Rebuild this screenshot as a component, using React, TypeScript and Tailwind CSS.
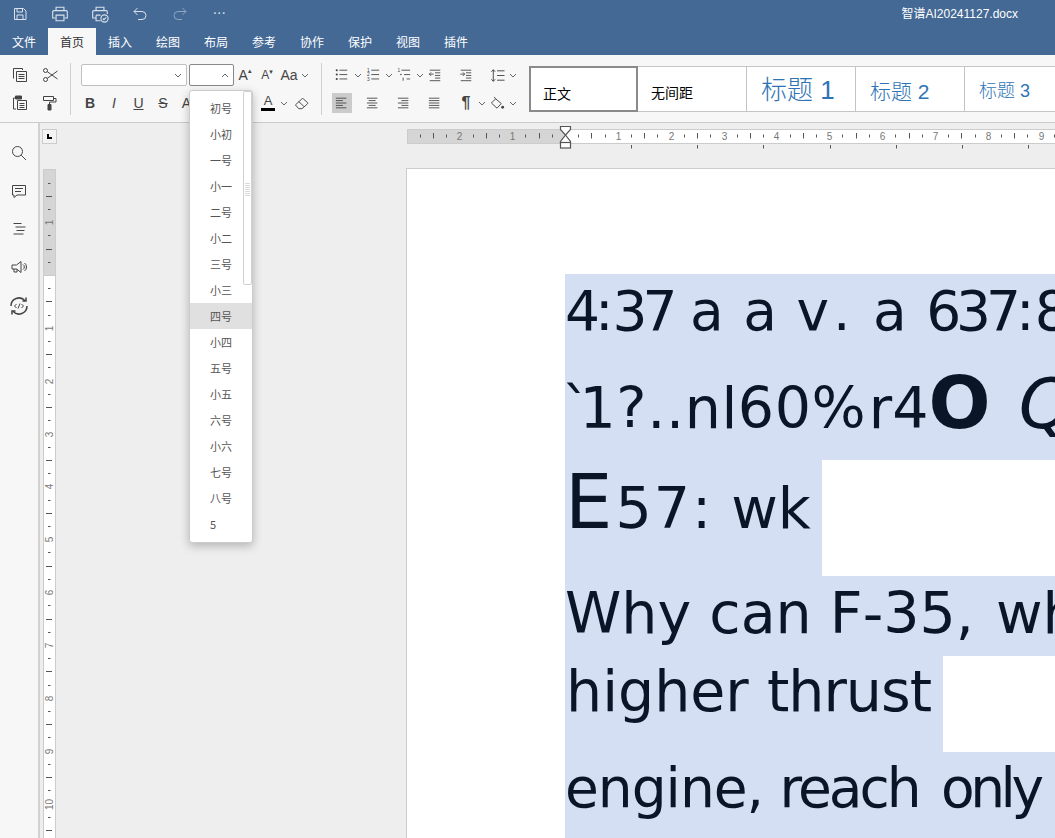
import React from 'react';

const SIZES = ['初号', '小初', '一号', '小一', '二号', '小二', '三号', '小三', '四号', '小四', '五号', '小五', '六号', '小六', '七号', '八号', '5'];
const TABS = ['文件', '首页', '插入', '绘图', '布局', '参考', '协作', '保护', '视图', '插件'];
const STEP = 52.85 / 4;

const Ic = ({ s = 16, children }: { s?: number; children: React.ReactNode }) => (
  <svg width={s} height={s} viewBox="0 0 16 16" fill="none" stroke="currentColor" strokeWidth="1">
    {children}
  </svg>
);

const Chev = ({ up }: { up?: boolean }) => (
  <svg width="8" height="5" viewBox="0 0 8 5" fill="none" stroke="#666" strokeWidth="1">
    <path d={up ? 'M1 4l3-3 3 3' : 'M1 1l3 3 3-3'} />
  </svg>
);

// width-fixed toolbar slot
const Slot = ({ w, active, className, children }: { w: string; active?: boolean; className?: string; children?: React.ReactNode }) => (
  <div className={`${w} h-7 flex items-center justify-center shrink-0 ${className ?? ''}`}>
    {active ? <div className="w-5 h-5 bg-[#cbcbcb] flex items-center justify-center">{children}</div> : children}
  </div>
);

const Divider = () => <div className="w-px h-[52px] bg-[#d0d0d0] self-center shrink-0" />;

const Lines = ({ rows }: { rows: [number, number][] }) => (
  <Ic s={14}>
    {rows.map(([x, w], i) => (
      <path key={i} d={`M${x} ${2.5 + i * 2.75}h${w}`} />
    ))}
  </Ic>
);

const HRuler = () => {
  const ticks = [];
  for (let k = -11; k <= 37; k++) {
    if (k === 0) continue;
    const x = Math.round(158 + k * STEP) + 0.5;
    if (k % 4 === 0) {
      ticks.push(<text key={k} x={x} y={14.5} textAnchor="middle" fontSize="10" fill="#777" fontFamily="Liberation Sans, sans-serif">{Math.abs(k / 4)}</text>);
    } else if (k % 2 === 0) {
      ticks.push(<path key={k} d={`M${x} 8v5.5`} stroke="#555" />);
    } else {
      ticks.push(<path key={k} d={`M${x} 9.5v3`} stroke="#555" />);
    }
  }
  const stops = [0, 1, 2, 3, 4, 5, 6].map(i => (
    <path key={i} d={`M${Math.round(224 + i * 66.2) + 0.5} 20v3.5`} stroke="#555" />
  ));
  return (
    <svg width="648" height="25" className="block shrink-0">
      <rect x="0.5" y="4.5" width="660" height="14" fill="#fff" stroke="#ccc" />
      <rect x="0.5" y="4.5" width="158" height="14" fill="#d5d5d5" stroke="#ccc" />
      {ticks}
      {stops}
      <path d="M153.5 1.5h10v3l-5 5.5 5 6.500v1h-10v-1l5-6.500-5-5.500z" fill="#fff" stroke="#555" strokeWidth="1.2" />
      <rect x="153.5" y="17.500" width="10" height="5.500" fill="#fff" stroke="#555" strokeWidth="1.2" />
    </svg>
  );
};

const VRuler = () => {
  const ticks = [];
  for (let k = -7; k <= 42; k++) {
    if (k === 0) continue;
    const y = Math.round(106 + k * STEP) + 0.5;
    if (k % 4 === 0) {
      ticks.push(<text key={k} x={0} y={0} transform={`translate(9.500 ${y}) rotate(-90)`} textAnchor="middle" fontSize="10" fill="#777" fontFamily="Liberation Sans, sans-serif">{Math.abs(k / 4)}</text>);
    } else if (k % 2 === 0) {
      ticks.push(<path key={k} d={`M3 ${y}h6`} stroke="#555" />);
    } else {
      ticks.push(<path key={k} d={`M5 ${y}h2.500`} stroke="#555" />);
    }
  }
  return (
    <svg width="13" height="669" className="block shrink-0">
      <rect x="0.5" y="0.5" width="12" height="680" fill="#fff" stroke="#ccc" />
      <rect x="0.5" y="0.5" width="12" height="106" fill="#d5d5d5" stroke="#ccc" />
      {ticks}
    </svg>
  );
};

const TitleBar = () => (
  <div className="h-7 flex items-center text-[#d9e1eb] relative">
    <div className="w-10 flex justify-center">
      <Ic>
        <path d="M2.500 2.500h9l2.500 2.500v8.500H2.500z" />
        <path d="M5 2.500v3.500h5.500v-3.500M5 13.500V9h6v4.500" />
      </Ic>
    </div>
    <div className="w-10 flex justify-center">
      <Ic s={18}>
        <path d="M4.500 5V2h7v3M4 11.500H1.500V6a1 1 0 0 1 1-1h11a1 1 0 0 1 1 1v5.500H12" />
        <path d="M4.500 9h7v5h-7z" />
      </Ic>
    </div>
    <div className="w-10 flex justify-center">
      <Ic s={18}>
        <path d="M4.500 5V2h7v3M4 11.500H1.500V6a1 1 0 0 1 1-1h11a1 1 0 0 1 1 1v2M4.500 9h4M4.500 9v5h4" />
        <circle cx="12" cy="12" r="3.200" />
        <path d="M10.500 12l1 1 2-2" />
      </Ic>
    </div>
    <div className="w-10 flex justify-center">
      <Ic>
        <path d="M5.500 2L2 5.500 5.500 9M2 5.500h8a4 4 0 0 1 0 8H6" />
      </Ic>
    </div>
    <div className="w-10 flex justify-center opacity-50">
      <Ic>
        <path d="M10.500 2L14 5.500 10.500 9M14 5.500H6a4 4 0 0 0 0 8h4" />
      </Ic>
    </div>
    <div className="w-10 flex justify-center text-[10px] tracking-[1px] leading-none">
      <span className="font-['Liberation_Sans',sans-serif] font-bold">···</span>
    </div>
    <div className="ml-auto pr-[37px] text-[12px] text-white font-['Liberation_Sans','Noto_Sans_CJK_SC',sans-serif]">智谱AI20241127.docx</div>
  </div>
);

const Tabs = () => (
  <div className="h-[27px] flex">
    {TABS.map(t => (
      <div key={t} className={`w-12 flex items-center justify-center text-[12px] ${t === '首页' ? 'bg-[#f7f7f7] text-[#333]' : 'text-white'}`}>
        {t}
      </div>
    ))}
  </div>
);

const Toolbar = () => (
  <div className="h-[68px] bg-[#f7f7f7] border-b border-[#cbcbcb] flex text-[#444] overflow-hidden">
    {/* clipboard */}
    <div className="w-[70px] pl-[5px] pt-[6px] shrink-0">
      <div className="flex">
        <Slot w="w-[30px]">
          <Ic>
            <path d="M1.500 11.500v-10h9V3" />
            <path d="M4.500 4.500h10v10h-10zM6.500 7.500h6M6.500 9.500h6M6.500 11.500h6" />
          </Ic>
        </Slot>
        <Slot w="w-[30px]">
          <Ic>
            <circle cx="3.500" cy="3.500" r="2" />
            <circle cx="3.500" cy="12.500" r="2" />
            <path d="M5.200 4.600L15.500 12M5.200 11.400L15.500 4" />
          </Ic>
        </Slot>
      </div>
      <div className="flex">
        <Slot w="w-[30px]">
          <Ic>
            <path d="M4 3H1.500v11H4" />
            <path d="M3.500 1h6v3h-6z" fill="currentColor" />
            <path d="M5.500 5.500h9v9h-9zM7.500 8.500h5M7.500 10.500h5M7.500 12.500h5" />
          </Ic>
        </Slot>
        <Slot w="w-[30px]">
          <Ic>
            <path d="M1.500 1.500h10v4h-10zM11.500 3.500h2.500v3.500H7.500v2" />
            <path d="M6 9.500h3v5.500H6z" fill="currentColor" />
          </Ic>
        </Slot>
      </div>
    </div>
    <Divider />

    {/* font */}
    <div className="w-[250px] pl-[7px] pt-[6px] shrink-0">
      <div className="flex h-7 items-center pl-[3px]">
        <div className="w-[106px] h-[22px] bg-white border border-[#c0c0c0] rounded-[2px] flex items-center justify-end pr-1 shrink-0">
          <Chev />
        </div>
        <div className="w-[45px] h-[22px] ml-[2px] bg-white border border-[#888] rounded-[2px] flex items-center justify-end pr-1 shrink-0">
          <Chev up />
        </div>
        <Slot w="w-[22px]">
          <span className="text-[14px] leading-none font-['Liberation_Sans',sans-serif]">A</span>
          <span className="text-[7px] leading-none self-start mt-[7px] font-['DejaVu_Sans',sans-serif]">▴</span>
        </Slot>
        <Slot w="w-[22px]">
          <span className="text-[12px] leading-none font-['Liberation_Sans',sans-serif]">A</span>
          <span className="text-[7px] leading-none self-start mt-[8px] font-['DejaVu_Sans',sans-serif]">▾</span>
        </Slot>
        <Slot w="w-[22px]">
          <span className="text-[14px] leading-none font-['Liberation_Sans',sans-serif]">Aa</span>
        </Slot>
        <Slot w="w-[10px]"><Chev /></Slot>
      </div>
      <div className="flex h-7 items-center text-[14px] font-['Liberation_Sans',sans-serif]">
        <Slot w="w-[24px]" className="font-bold">B</Slot>
        <Slot w="w-[24px]" className="italic">I</Slot>
        <Slot w="w-[25px]" className="underline">U</Slot>
        <Slot w="w-[24px]" className="line-through">S</Slot>
        <Slot w="w-[23px]">A</Slot>
        <div className="w-[60px] shrink-0" />
        <Slot w="w-[20px]">
          <div className="flex flex-col items-center">
            <span className="text-[13px] leading-[12px]">A</span>
            <div className="w-[14px] h-[3px] bg-black mt-[1px]" />
          </div>
        </Slot>
        <Slot w="w-[12px]"><Chev /></Slot>
        <Slot w="w-[22px]">
          <Ic s={15}>
            <path d="M1.500 9.500l7-6.500a1 1 0 0 1 1.400 0l4.500 4a1 1 0 0 1 0 1.400L8.500 13.500H5z" />
            <path d="M5 6l5.500 5" />
          </Ic>
        </Slot>
      </div>
    </div>
    <Divider />

    {/* paragraph */}
    <div className="w-[207px] pl-[10px] pt-[6px] shrink-0">
      <div className="flex h-7 items-center">
        <Slot w="w-[20px]">
          <Ic s={14}>
            <path d="M5 2.500h9M5 7.500h9M5 12.500h9" />
            <circle cx="2" cy="2.500" r="1.200" fill="currentColor" stroke="none" />
            <circle cx="2" cy="7.500" r="1.200" fill="currentColor" stroke="none" />
            <circle cx="2" cy="12.500" r="1.200" fill="currentColor" stroke="none" />
          </Ic>
        </Slot>
        <Slot w="w-[11px]"><Chev /></Slot>
        <Slot w="w-[20px]">
          <Ic s={14}>
            <path d="M6 2.500h9M6 7.500h9M6 12.500h9" />
            <g fontSize="5.500" stroke="none" fill="currentColor" fontFamily="Liberation Sans, sans-serif">
              <text x="1" y="4.500">1</text>
              <text x="1" y="9.500">2</text>
              <text x="1" y="15">3</text>
            </g>
          </Ic>
        </Slot>
        <Slot w="w-[11px]"><Chev /></Slot>
        <Slot w="w-[20px]">
          <Ic s={14}>
            <path d="M5 2.500h10M8 7.500h7M11 12.500h4" />
            <text x="0.500" y="5" fontSize="5.500" stroke="none" fill="currentColor" fontFamily="Liberation Sans, sans-serif">1</text>
            <circle cx="4.500" cy="7.500" r="0.900" fill="currentColor" stroke="none" />
            <path d="M7 11v3.500" />
          </Ic>
        </Slot>
        <Slot w="w-[11px]"><Chev /></Slot>
        <Slot w="w-[20px]">
          <Ic s={14}>
            <path d="M2 2.500h12M8 5.500h6M8 8.500h6M8 11.500h6M2 14.500h12M6.500 7H1.500M3.500 5L1.500 7l2 2" />
          </Ic>
        </Slot>
        <div className="w-[11px] shrink-0" />
        <Slot w="w-[20px]">
          <Ic s={14}>
            <path d="M2 2.500h12M8 5.500h6M8 8.500h6M8 11.500h6M2 14.500h12M1.500 7h5M4.500 5l2 2-2 2" />
          </Ic>
        </Slot>
        <div className="w-[11px] shrink-0" />
        <Slot w="w-[20px]">
          <Ic s={15}>
            <path d="M3.500 2v12M1.500 4l2-2.200 2 2.200M1.500 12l2 2.200 2-2.200M7.500 3h8M7.500 8h8M7.500 13h8" />
          </Ic>
        </Slot>
        <Slot w="w-[11px]"><Chev /></Slot>
      </div>
      <div className="flex h-7 items-center">
        <Slot w="w-[20px]" active><Lines rows={[[1, 12], [1, 8], [1, 12], [1, 8], [1, 12]]} /></Slot>
        <div className="w-[11px] shrink-0" />
        <Slot w="w-[20px]"><Lines rows={[[1, 12], [3, 8], [1, 12], [3, 8], [1, 12]]} /></Slot>
        <div className="w-[11px] shrink-0" />
        <Slot w="w-[20px]"><Lines rows={[[1, 12], [5, 8], [1, 12], [5, 8], [1, 12]]} /></Slot>
        <div className="w-[11px] shrink-0" />
        <Slot w="w-[20px]"><Lines rows={[[1, 12], [1, 12], [1, 12], [1, 12], [1, 12]]} /></Slot>
        <div className="w-[11px] shrink-0" />
        <Slot w="w-[20px]" className="text-[16px] font-bold font-['Liberation_Sans',sans-serif]">¶</Slot>
        <Slot w="w-[11px]"><Chev /></Slot>
        <Slot w="w-[20px]">
          <Ic s={15}>
            <path d="M1.500 7.500L6 3l6 5-4.500 5z" />
            <path d="M4.500 1l1.500 2" />
            <circle cx="13.500" cy="12" r="1.500" fill="currentColor" stroke="none" />
          </Ic>
        </Slot>
        <Slot w="w-[11px]"><Chev /></Slot>
      </div>
    </div>

    {/* style gallery */}
    <div className="h-[46px] mt-[11px] flex border-y border-[#c4c4c4] bg-white shrink-0 font-['Liberation_Sans','Noto_Sans_CJK_SC',sans-serif]">
      <div className="w-[109px] -my-px border-2 border-[#8a8a8a] pl-[12px] pt-[15px] text-[14px] leading-[22px] text-black">正文</div>
      <div className="w-[109px] border-r border-[#c4c4c4] pl-[13px] pt-[15px] text-[14px] leading-[22px] text-black">无间距</div>
      <div className="w-[109px] border-r border-[#c4c4c4] pl-[14px] pt-[2px] flex items-center text-[26px] leading-none font-light text-[#2e74b5]">标题 1</div>
      <div className="w-[109px] border-r border-[#c4c4c4] pl-[14px] pt-[4px] flex items-center text-[21px] leading-none font-light text-[#2e74b5]">标题 2</div>
      <div className="w-[109px] pl-[14px] pt-[4px] flex items-center text-[18px] leading-none font-light text-[#2e74b5]">标题 3</div>
    </div>
  </div>
);

const Sidebar = () => (
  <div className="w-10 shrink-0 bg-[#f7f7f7] border-r-2 border-[#d2d2d2] flex flex-col items-center pt-[22px] text-[#444]">
    <div className="h-4 mb-[22px]">
      <Ic>
        <circle cx="6.500" cy="6.500" r="5" />
        <path d="M10.200 10.200L15 15" />
      </Ic>
    </div>
    <div className="h-4 mb-[22px]">
      <Ic>
        <path d="M1.500 2.500h13v9.500H6l-3 2.500V12H1.500zM4 5.500h8M4 8.500h6" />
      </Ic>
    </div>
    <div className="h-4 mb-[22px]">
      <Ic>
        <path d="M2.500 2.500h8M4.500 6h10M5.500 9.500h8M2.500 13h10" />
      </Ic>
    </div>
    <div className="h-4 mb-[21px]">
      <Ic>
        <path d="M1 6h4.500L10 2.500v11L5.500 10H1zM3 10v3h3v-3" />
        <path d="M12 5.500a3 3 0 0 1 0 5M13.500 4a5 5 0 0 1 0 8" />
      </Ic>
    </div>
    <div className="h-5">
      <svg width="20" height="20" viewBox="0 0 20 20" fill="none" stroke="currentColor" strokeWidth="1.500">
        <path d="M2 10a8 8 0 0 1 14-5.300M18 10a8 8 0 0 1-14 5.300" />
        <path d="M17 1.500v3.500h-3.500M3 18.500V15h3.500" />
        <path d="M7.500 8l-2 2 2 2M12.500 8l2 2-2 2M11 7.500l-2 5" strokeWidth="1" />
      </svg>
    </div>
  </div>
);

const SEL = 'bg-[#d4dff3]';

const Page = () => (
  <div className="ml-[350px] flex-1 h-[670px] bg-white border-l border-t border-[#cccccc] pl-[158px] pt-[105px] overflow-hidden whitespace-nowrap text-[#0a1628] font-['DejaVu_Sans',sans-serif]">
    <div className={`${SEL} h-[96px] text-[55px] leading-[75px] w-[600px] [word-spacing:2px]`}>
      <span className="tracking-[-5px]">4</span><span className="tracking-[-1px]">:</span><span className="tracking-[-5px]">37</span> <span className="ml-[-2px]">a</span> a v<span className="ml-[4px]">.</span> <span className="ml-[3px]">a</span> <span className="tracking-[-5px]">637</span>:<span className="tracking-[-5px]">8</span>
    </div>
    <div className={`${SEL} h-[90px] text-[57px] leading-[77px] w-[600px]`}>
      <span className="tracking-[-11px] ml-[-3px]">`</span><span className="tracking-[0.6px]">1?..nl60</span><span className="tracking-[3px]">%</span>r4<span className="text-[73px] leading-[0] font-bold">O</span> <span className="text-[70px] leading-[0] italic ml-[10px]">Q</span>
    </div>
    <div className="h-[116px] text-[57px] leading-[97px]">
      <div className={`${SEL} h-full w-[257px]`}>
        <span className="text-[75px] leading-[0] tracking-[3px]">E</span><span className="tracking-[2px]">57:</span> wk
      </div>
    </div>
    <div className={`${SEL} h-[80px] text-[57px] leading-[75px] w-[600px]`}>
      Why can F-35, <span className="ml-[4px]">wh</span>
    </div>
    <div className="h-[96px] text-[57px] leading-[70px]">
      <div className={`${SEL} h-full w-[378px] pl-px`}>
        higher <span className="tracking-[-1px]">thrust</span>
      </div>
    </div>
    <div className={`${SEL} h-[90px] text-[55px] leading-[72px] w-[600px] tracking-[-1px]`}>
      engine, <span className="tracking-[-3px]">reach</span> <span className="tracking-[-4.5px] ml-[6px]">only</span>
    </div>
  </div>
);

const Workspace = () => (
  <div className="flex-1 bg-[#eeeeee] flex flex-col overflow-hidden">
    <div className="h-[45px] flex shrink-0">
      <div className="w-[15px] h-[15px] ml-[2px] mt-[6px] bg-[#f3f3f3] border border-[#cccccc] flex items-center justify-center shrink-0">
        <div className="w-[5px] h-[5px] border-l-2 border-b-2 border-black" />
      </div>
      <div className="ml-[350px] mt-[2px]">
        <HRuler />
      </div>
    </div>
    <div className="flex flex-1 min-h-0 pl-[3px]">
      <div className="pt-px">
        <VRuler />
      </div>
      <Page />
    </div>
  </div>
);

const SizeMenu = () => (
  <div className="absolute left-[189px] top-[90px] w-[64px] h-[453px] bg-white border border-[#cccccc] rounded-[3px] shadow-[0_3px_10px_rgba(0,0,0,0.25)] py-1">
    {SIZES.map(s => (
      <div key={s} className={`h-[26px] pl-[20px] flex items-center text-[11px] text-[#555] ${s === '四号' ? 'bg-[#e0e0e0]' : ''}`}>
        {s}
      </div>
    ))}
    <div className="absolute right-0 top-0 w-[9px] h-[194px] bg-white border border-[#d0d0d0] rounded-[2px] flex flex-col items-center justify-center gap-px pt-[2px]">
      {[0, 1, 2, 3, 4, 5, 6].map(i => (
        <div key={i} className="w-[5px] h-px bg-[#d8d8d8]" />
      ))}
    </div>
  </div>
);

export default function App() {
  return (
    <div className="relative w-[1055px] h-[838px] overflow-hidden flex flex-col bg-white font-['Noto_Sans_CJK_SC',sans-serif]">
      <div className="bg-[#446995] shrink-0">
        <TitleBar />
        <Tabs />
      </div>
      <Toolbar />
      <div className="flex flex-1 min-h-0">
        <Sidebar />
        <Workspace />
      </div>
      <SizeMenu />
    </div>
  );
}
